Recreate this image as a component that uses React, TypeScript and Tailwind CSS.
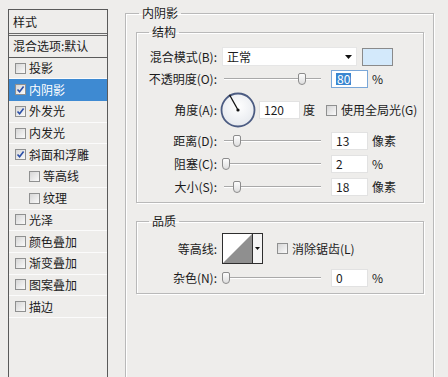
import React from "react";

const items = [
  { name: "投影", checked: false },
  { name: "内阴影", checked: true, active: true },
  { name: "外发光", checked: true },
  { name: "内发光", checked: false },
  { name: "斜面和浮雕", checked: true },
  { name: "等高线", checked: false, sub: true },
  { name: "纹理", checked: false, sub: true },
  { name: "光泽", checked: false },
  { name: "颜色叠加", checked: false },
  { name: "渐变叠加", checked: false },
  { name: "图案叠加", checked: false },
  { name: "描边", checked: false },
];

function Checkbox({ checked }: { checked?: boolean }) {
  return (
    <span className="flex h-[11px] w-[11px] shrink-0 items-center justify-center border border-[#8f9090] bg-gradient-to-br from-[#d6d6d6] to-[#fafafa]">
      {checked && (
        <svg width="9" height="9" viewBox="0 0 9 9">
          <path d="M1.5 4.5 L3.6 6.8 L7.6 1.6" fill="none" stroke="#2b4fa8" strokeWidth="1.6" />
        </svg>
      )}
    </span>
  );
}

function Slider({ pos }: { pos: number }) {
  return (
    <div className="relative flex h-[14px] w-[97px] items-center">
      <div className="h-[2px] w-full border-t border-[#a9a9a9] border-b border-b-white" />
      <div
        className="absolute top-[1px] h-[12px] w-[8px] rounded-b-[4px] rounded-t-[2px] border border-[#8c8c8c] bg-gradient-to-b from-[#fdfdfd] to-[#dedede]"
        style={{ left: pos }}
      />
    </div>
  );
}

function Field({ value, w = 37, selected }: { value: string; w?: number; selected?: boolean }) {
  return (
    <div
      className={`flex h-[18px] items-center border bg-white pl-[4px] text-[12px] leading-none ${selected ? "border-[#7aa7d8]" : "border-[#e2e2e2]"}`}
      style={{ width: w }}
    >
      {selected ? <span className="bg-[#3a86d0] px-[1px] text-white">{value}</span> : value}
    </div>
  );
}

function Label({ children }: { children: React.ReactNode }) {
  return <span className="w-[80px] shrink-0 text-right text-[12px] leading-none">{children}</span>;
}

function SliderRow({ label, pos, value, unit }: { label: string; pos: number; value: string; unit: string }) {
  return (
    <div className="flex h-[18px] items-center">
      <Label>{label}</Label>
      <div className="ml-[7px]">
        <Slider pos={pos} />
      </div>
      <div className="ml-[10px]">
        <Field value={value} />
      </div>
      <span className="ml-[4px] text-[12px] leading-none">{unit}</span>
    </div>
  );
}

function Dial() {
  return (
    <svg width="36" height="36" viewBox="0 0 36 36">
      <defs>
        <radialGradient id="dg" cx="50%" cy="40%" r="60%">
          <stop offset="0%" stopColor="#ffffff" />
          <stop offset="100%" stopColor="#e6e9ee" />
        </radialGradient>
      </defs>
      <circle cx="18" cy="18" r="16.5" fill="url(#dg)" stroke="#4c5c82" strokeWidth="1.8" />
      <line x1="18" y1="18" x2="9.5" y2="2.8" stroke="#111" strokeWidth="1.3" />
      <circle cx="18" cy="18" r="1.6" fill="#111" />
    </svg>
  );
}

function Contour() {
  return (
    <div className="flex h-[31px] w-[41px] border border-[#2e2e2e] bg-white">
      <svg width="29" height="29" viewBox="0 0 29 29" className="shrink-0">
        <polygon points="0,29 29,0 29,29" fill="#8f8f8f" />
      </svg>
      <div className="flex flex-1 items-center justify-center border-l border-[#2e2e2e] bg-[#f4f4f4]">
        <svg width="5" height="3" viewBox="0 0 5 3">
          <polygon points="0,0 5,0 2.5,3" fill="#111" />
        </svg>
      </div>
    </div>
  );
}

const fs = "border border-[#b9b9b9] shadow-[inset_1px_1px_0_#fff,1px_1px_0_#fff]";

export default function App() {
  return (
    <div className="flex h-[377px] w-[448px] overflow-hidden bg-[#eeedeb] font-['Noto_Sans_CJK_SC','Noto_Sans',sans-serif] text-[#1b1b1b]">
      {/* left list */}
      <div className="ml-[8px] mt-[9px] flex h-[400px] w-[100px] shrink-0 flex-col border border-[#5a5a5a]">
        <div className="flex h-[26px] items-center border-b-[3px] border-double border-[#6a6a6a] pl-[4px] text-[12px] leading-none">
          样式
        </div>
        <div className="flex h-[21.7px] items-center border-b border-[#5a5a5a] pl-[4px] text-[12px] leading-none">
          混合选项:默认
        </div>
        {items.map((it) => (
          <div
            key={it.name}
            className={`flex h-[21.7px] items-center gap-[3px] border-b text-[12px] leading-none ${it.sub ? "pl-[20px]" : "pl-[6px]"} ${it.active ? "border-[#3e8ad2] bg-[#3e8ad2] text-white" : "border-[#fbfbfb]"}`}
          >
            <Checkbox checked={it.checked} />
            <span>{it.name}</span>
          </div>
        ))}
      </div>

      {/* right settings */}
      <fieldset className={`ml-[17px] mt-[5px] h-[420px] w-[309px] shrink-0 ${fs}`}>
        <legend className="ml-[13px] px-[3px] text-[12px] leading-[16px]">内阴影</legend>

        <fieldset className={`ml-[10px] mt-[3px] w-[288px] pb-[6px] pt-[7px] ${fs}`}>
          <legend className="ml-[12px] px-[3px] text-[12px] leading-[16px]">结构</legend>

          <div className="flex h-[19px] items-center">
            <Label>混合模式(B):</Label>
            <div className="ml-[5px] flex h-[19px] w-[135px] items-center justify-between border border-[#e6e6e6] bg-white pl-[4px] pr-[4px] text-[12px] leading-none">
              <span>正常</span>
              <svg width="7" height="4" viewBox="0 0 7 4">
                <polygon points="0,0 7,0 3.5,4" fill="#111" />
              </svg>
            </div>
            <div className="ml-[5px] h-[18px] w-[31px] border border-[#8a8a8a] bg-[#d3e9fb]" />
          </div>

          <div className="mt-[4px]">
            <div className="flex h-[18px] items-center">
              <Label>不透明度(O):</Label>
              <div className="ml-[7px]">
                <Slider pos={74} />
              </div>
              <div className="ml-[10px]">
                <Field value="80" selected />
              </div>
              <span className="ml-[4px] text-[12px] leading-none">%</span>
            </div>
          </div>

          <div className="mt-[4px] flex h-[36px] items-center">
            <Label>角度(A):</Label>
            <div className="ml-[3px]">
              <Dial />
            </div>
            <div className="ml-[3px]">
              <Field value="120" w={41} />
            </div>
            <span className="ml-[3px] text-[12px] leading-none">度</span>
            <div className="ml-[11px] flex items-center gap-[4px] text-[12px] leading-none">
              <Checkbox />
              <span>使用全局光(G)</span>
            </div>
          </div>

          <div className="mt-[4px] flex flex-col gap-[5px]">
            <SliderRow label="距离(D):" pos={9} value="13" unit="像素" />
            <SliderRow label="阻塞(C):" pos={-2} value="2" unit="%" />
            <SliderRow label="大小(S):" pos={9} value="18" unit="像素" />
          </div>
        </fieldset>

        <fieldset className={`ml-[10px] mt-[10px] w-[288px] pb-[6px] pt-[4px] ${fs}`}>
          <legend className="ml-[12px] px-[3px] text-[12px] leading-[16px]">品质</legend>

          <div className="flex h-[31px] items-center">
            <Label>等高线:</Label>
            <div className="ml-[5px]">
              <Contour />
            </div>
            <div className="ml-[14px] flex items-center gap-[4px] text-[12px] leading-none">
              <Checkbox />
              <span>消除锯齿(L)</span>
            </div>
          </div>

          <div className="mt-[5px]">
            <SliderRow label="杂色(N):" pos={-2} value="0" unit="%" />
          </div>
        </fieldset>
      </fieldset>
    </div>
  );
}
